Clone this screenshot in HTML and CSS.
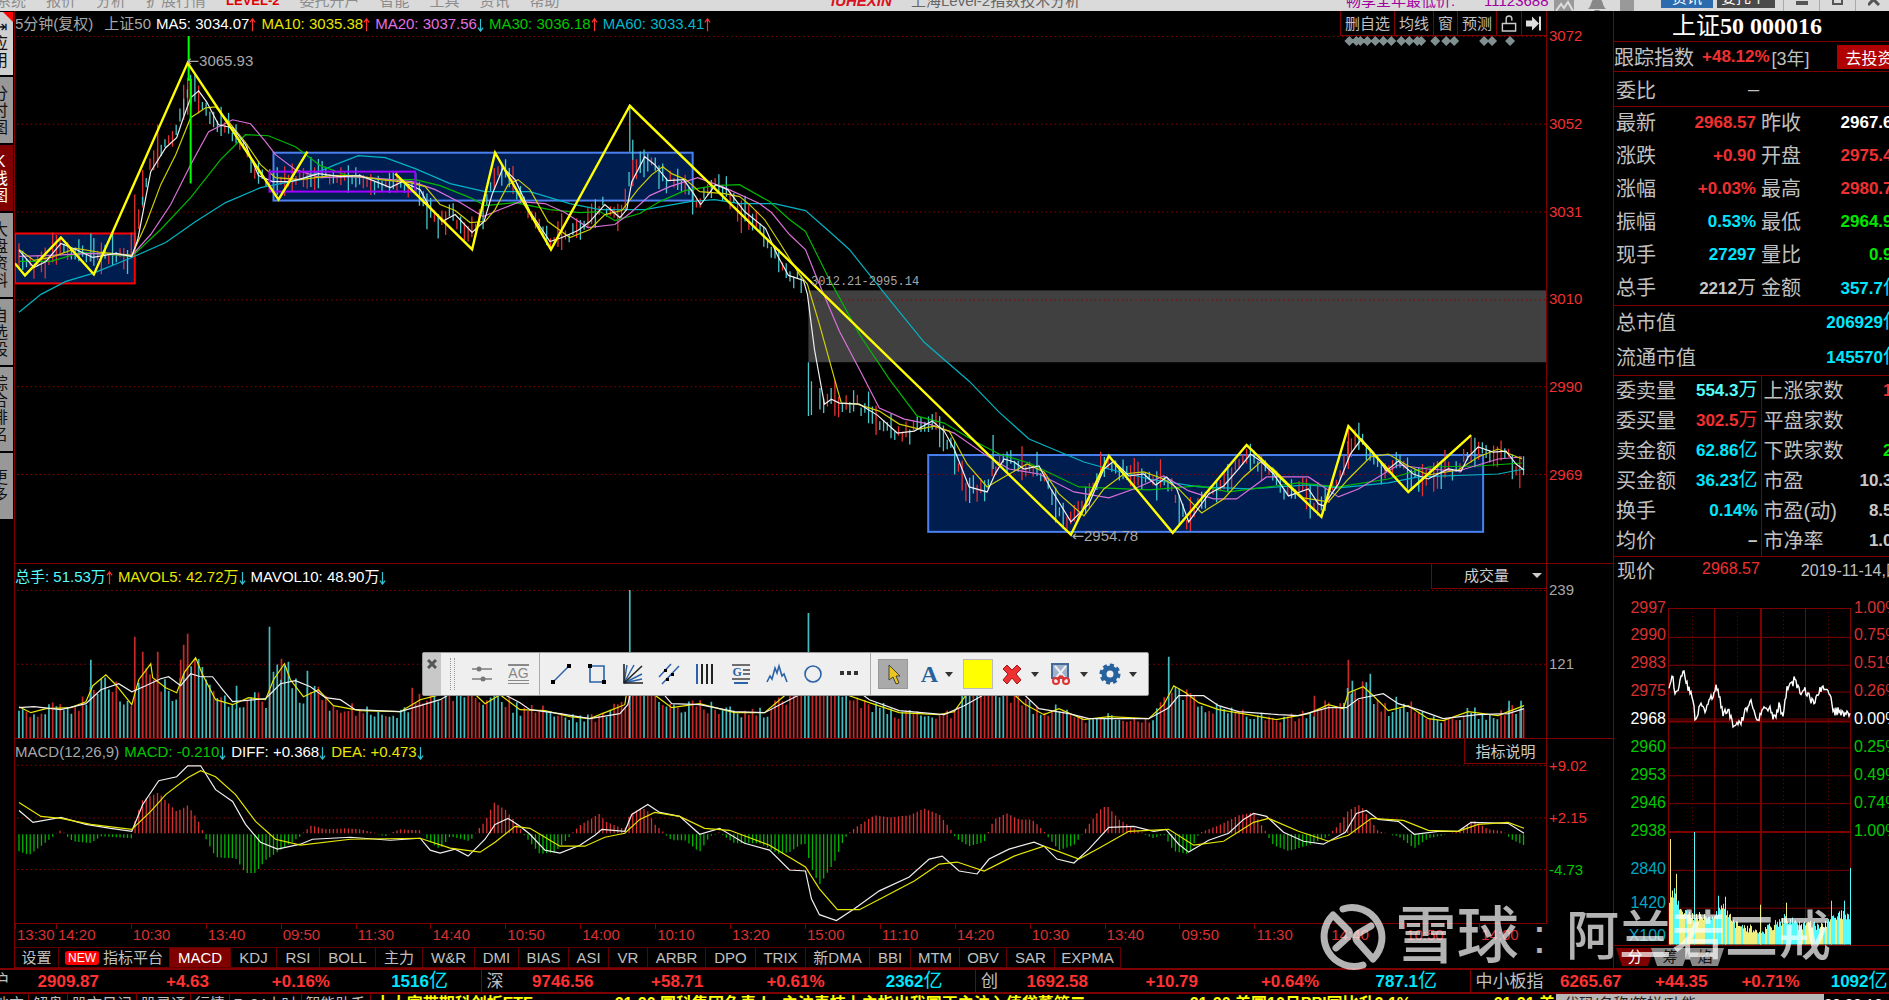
FILE: index.html
```
<!DOCTYPE html>
<html lang="zh-Hans">
<head>
  <meta charset="UTF-8">
  <title>上证50 000016</title>
  <link rel="stylesheet" href="styles.css">
</head>
<body>
  <svg class="defs" aria-hidden="true">
    <symbol id="up" viewBox="0 0 8 16"><path d="M4 15V2M1 5l3-4 3 4" fill="none" stroke="#ff3030" stroke-width="1.4"/></symbol>
    <symbol id="down" viewBox="0 0 8 16"><path d="M4 1v13M1 11l3 4 3-4" fill="none" stroke="#30c0d0" stroke-width="1.4"/></symbol>
    <symbol id="caret" viewBox="0 0 8 5"><path d="M0 0h8L4 5z" fill="#333"/></symbol>
  </svg>

  <header class="menubar">
    <nav class="menu">
      <a href="#">系统</a><a href="#">报价</a><a href="#">分析</a><a href="#">扩展行情</a><a href="#" class="level2">LEVEL-2</a><a href="#">委托开户</a><a href="#">智能</a><a href="#">工具</a><a href="#">资讯</a><a href="#">帮助</a>
    </nav>
    <b class="brand">iUHEXIN</b>
    <span class="apptitle">上海Level-2指数技术分析</span>
    <span class="promo">畅享全年最低价:</span>
    <span class="promo account">11123688</span>
    <span class="sysicons">
      <svg width="20" height="16" viewBox="0 0 20 16"><path d="M0 0h20v16H0z" fill="#999"/><path d="M2 14l5-7 3 4 4-6 5 9" fill="none" stroke="#ddd" stroke-width="2"/></svg>
      <svg width="18" height="16" viewBox="0 0 18 16"><path d="M0 12c4-3 3-12 9-12s5 9 9 12zM6 13h6l-3 3z" fill="#888"/></svg>
      <svg width="14" height="16" viewBox="0 0 14 16"><path d="M0 0h14v16H0z" fill="#999"/></svg>
    </span>
    <button class="topbtn info">资讯</button>
    <button class="topbtn trade">委托个-</button>
    <span class="winbtns">
      <button aria-label="最小化"><svg width="12" height="12"><path d="M0 7h12v4H0z" fill="#555"/></svg></button>
      <button aria-label="还原"><svg width="12" height="12"><path d="M1 1h9v9H1z" fill="none" stroke="#555" stroke-width="2"/></svg></button>
      <button aria-label="关闭"><svg width="12" height="12"><path d="M0 0l11 11M11 0L0 11" stroke="#555" stroke-width="3"/></svg></button>
    </span>
  </header>

  <main class="main">
    <nav class="side">
      <button class="s-app"><i></i><span>⇥应用</span></button>
      <button class="s3"><span>分时图</span></button>
      <button class="s3 on"><span>K线图</span></button>
      <button class="s4"><span>大盘资料</span></button>
      <button class="s3"><span>自选股</span></button>
      <button class="s4"><span>综合排名</span></button>
      <button class="s3"><span>更多</span></button>
    </nav>

    <section class="charts">
      <div class="panel price">
        <div class="plot">
          <svg class="canvas" id="kline" viewBox="14 11 1534 553" preserveAspectRatio="none"></svg>
          <div class="head">
            <span class="gray">5分钟(复权)</span>
            <span class="gray name">上证50</span>
            <span class="white">MA5: 3034.07<svg><use href="#up"/></svg></span>
            <span class="yellow">MA10: 3035.38<svg><use href="#up"/></svg></span>
            <span class="pink">MA20: 3037.56<svg><use href="#down"/></svg></span>
            <span class="green">MA30: 3036.18<svg><use href="#up"/></svg></span>
            <span class="sea">MA60: 3033.41<svg><use href="#up"/></svg></span>
            <span class="tools">
              <button>删自选</button><button>均线</button><button>窗</button><button>预测</button>
              <button aria-label="锁定"><svg class="ico" width="16" height="18" viewBox="0 0 16 18"><path d="M1 9h14v8H1zM5 9V4q0-3 3-3t3 3v2" fill="none" stroke="#ccc" stroke-width="1.5"/></svg></button>
              <button aria-label="移到最后"><svg class="ico" width="16" height="16" viewBox="0 0 16 16"><path d="M0 5h6V1l7 7-7 7v-4H0zM13 1h2v14h-2z" fill="#ddd"/></svg></button>
            </span>
          </div>
          <span class="note high"><i>←</i>3065.93</span>
          <span class="note gap">3012.21-2995.14</span>
          <span class="note low"><i>←</i>2954.78</span>
        </div>
        <div class="axis red"><span>3072</span><span>3052</span><span>3031</span><span>3010</span><span>2990</span><span>2969</span></div>
      </div>

      <div class="panel vol">
        <div class="plot">
          <svg class="canvas" id="volume" viewBox="14 564 1534 175" preserveAspectRatio="none"></svg>
          <div class="head">
            <span class="aqua">总手: 51.53万<svg><use href="#up"/></svg></span>
            <span class="yellow">MAVOL5: 42.72万<svg><use href="#down"/></svg></span>
            <span class="white">MAVOL10: 48.90万<svg><use href="#down"/></svg></span>
            <label class="picker"><select aria-label="指标"><option>成交量</option></select></label>
          </div>
        </div>
        <div class="axis gray"><span>239</span><span>121</span></div>
      </div>

      <div class="panel macd">
        <div class="plot">
          <svg class="canvas" id="macd" viewBox="14 739 1534 185" preserveAspectRatio="none"></svg>
          <div class="head">
            <span class="gray">MACD(12,26,9)</span>
            <span class="green">MACD: -0.210<svg><use href="#down"/></svg></span>
            <span class="white">DIFF: +0.368<svg><use href="#down"/></svg></span>
            <span class="yellow">DEA: +0.473<svg><use href="#down"/></svg></span>
            <button class="explain">指标说明</button>
          </div>
        </div>
        <div class="axis red"><span>+9.02</span><span>+2.15</span><span class="green">-4.73</span></div>
      </div>

      <div class="times">
        <span>13:30</span><span>14:20</span><span>10:30</span><span>13:40</span><span>09:50</span><span>11:30</span><span>14:40</span><span>10:50</span><span>14:00</span><span>10:10</span><span>13:20</span><span>15:00</span><span>11:10</span><span>14:20</span><span>10:30</span><span>13:40</span><span>09:50</span><span>11:30</span><span>14:40</span><span>10:50</span><span>14:00</span>
      </div>

      <nav class="tabs">
        <button>设置</button><button class="plat"><em>NEW</em>指标平台</button><button class="on">MACD</button><button>KDJ</button><button>RSI</button><button>BOLL</button><button>主力</button><button>W&amp;R</button><button>DMI</button><button>BIAS</button><button>ASI</button><button>VR</button><button>ARBR</button><button>DPO</button><button>TRIX</button><button>新DMA</button><button>BBI</button><button>MTM</button><button>OBV</button><button>SAR</button><button>EXPMA</button>
      </nav>

      <div class="drawbar">
        <button class="close" aria-label="关闭"><svg width="10" height="10"><path d="M1 1l8 8M9 1L1 9" stroke="#555" stroke-width="3"/></svg></button>
        <span class="grip"></span>
        <button aria-label="水平线"><svg width="24" height="24"><path d="M2 7h20M2 17h20" stroke="#999" stroke-width="2"/><circle cx="9" cy="7" r="2.5" fill="#777"/><circle cx="13" cy="17" r="2.5" fill="#777"/></svg></button>
        <button class="ag" aria-label="文字线"><span>AG</span></button>
        <span class="rule"></span>
        <button aria-label="线段"><svg width="24" height="24"><path d="M4 20L20 4" stroke="#2b62a8" stroke-width="1.5"/><path d="M2 18h4v4H2zM18 2h4v4h-4z"/></svg></button>
        <button aria-label="矩形"><svg width="24" height="24"><path d="M5 4h14v16H5z" fill="none" stroke="#2b62a8" stroke-width="1.6"/><path d="M3 2h4v4H3zM17 18h4v4h-4z"/></svg></button>
        <button aria-label="扇形线"><svg width="24" height="24"><path d="M3 21L6 3M3 21L13 3M3 21l18-9M3 21l18-4" stroke="#2b62a8" stroke-width="1.5"/><path d="M3 2v19h19M3 21L21 4" fill="none" stroke="#222" stroke-width="1.6"/></svg></button>
        <button aria-label="平行线"><svg width="24" height="24"><path d="M2 15L14 2M5 22L22 4" stroke="#2b62a8" stroke-width="1.5"/><path d="M7 7h3v3H7zM14 11h3v3h-3zM9 16h3v3H9z"/></svg></button>
        <button aria-label="周期线"><svg width="24" height="24"><path d="M4 2v20" stroke="#2b62a8" stroke-width="2"/><path d="M9 2v20M14 2v20M19 2v20" stroke="#222" stroke-width="2"/></svg></button>
        <button class="ge" aria-label="黄金分割"><svg width="24" height="24"><path d="M3 3h18M14 8h7M14 12h7M3 17h18" stroke="#444" stroke-width="1.5"/><path d="M5 21h14" stroke="#2b62a8" stroke-width="2"/></svg><span>G</span></button>
        <button aria-label="波浪"><svg width="24" height="24"><path d="M2 20l3-6 2 3 3-11 2 5 2-7 3 10 2-2 3 8" fill="none" stroke="#2b62a8" stroke-width="1.6"/></svg></button>
        <button aria-label="圆"><svg width="24" height="24"><circle cx="12" cy="12" r="8" fill="none" stroke="#2b62a8" stroke-width="1.6"/></svg></button>
        <button aria-label="更多"><svg width="24" height="24"><path d="M3 9h4v4H3zM10 9h4v4h-4zM17 9h4v4h-4z" fill="#333"/></svg></button>
        <span class="rule"></span>
        <button class="on" aria-label="选择"><svg width="24" height="24"><path d="M8 3v15l4-3 3 7 3-1-3-7h4z" fill="#ecc520" stroke="#443" stroke-width="1"/></svg></button>
        <button class="wide letter" aria-label="字体"><span>A</span><svg class="dd"><use href="#caret"/></svg></button>
        <button class="swatch" aria-label="颜色"></button>
        <button class="wide" aria-label="删除"><svg width="24" height="24"><path d="M7 3l5 5 5-5 4 4-5 5 5 6-4 4-5-6-5 6-4-4 5-6-5-5z" fill="#ee3030" stroke="#a01818"/></svg><svg class="dd"><use href="#caret"/></svg></button>
        <button class="wide" aria-label="截图"><svg width="24" height="24"><path d="M3 2h16v14H3z" fill="#9fb4cc" stroke="#47699a" stroke-width="2"/><path d="M6 4l10 12M17 4L7 16" stroke="#eee" stroke-width="2"/><path d="M12 14l-4 4M12 14l4 4" stroke="#d33" stroke-width="3"/><circle cx="7" cy="19" r="3" fill="none" stroke="#d33" stroke-width="2"/><circle cx="17" cy="19" r="3" fill="none" stroke="#d33" stroke-width="2"/></svg><svg class="dd"><use href="#caret"/></svg></button>
        <button class="wide" aria-label="设置"><svg width="24" height="24"><circle cx="12" cy="12" r="6" fill="none" stroke="#27629e" stroke-width="5"/><circle cx="12" cy="12" r="9" fill="none" stroke="#27629e" stroke-width="3" stroke-dasharray="4 3"/></svg><svg class="dd"><use href="#caret"/></svg></button>
      </div>
    </section>

    <aside class="quote">
      <div class="inner">
        <h1>上证<b>50 000016</b></h1>
        <div class="track"><span>跟踪指数</span><b class="red">+48.12%</b><span class="yr">[3年]</span><button>去投资</button></div>
        <div class="ratio"><span>委比</span><span>–</span></div>
        <table class="q6">
          <tr><th>最新</th><td class="red">2968.57</td><th>昨收</th><td class="white">2967.67</td></tr>
          <tr><th>涨跌</th><td class="red">+0.90</td><th>开盘</th><td class="red">2975.40</td></tr>
          <tr><th>涨幅</th><td class="red">+0.03%</td><th>最高</th><td class="red">2980.70</td></tr>
          <tr><th>振幅</th><td class="blue">0.53%</td><th>最低</th><td class="lime">2964.90</td></tr>
          <tr><th>现手</th><td class="blue">27297</td><th>量比</th><td class="lime">0.90</td></tr>
          <tr><th>总手</th><td class="silver">2212<i>万</i></td><th>金额</th><td class="blue">357.7<i>亿</i></td></tr>
        </table>
        <table class="caps">
          <tr><th>总市值</th><td class="blue">206929<i>亿</i></td></tr>
          <tr><th>流通市值</th><td class="blue">145570<i>亿</i></td></tr>
        </table>
        <table class="more">
          <tr><th>委卖量</th><td class="aqua">554.3<i>万</i></td><th>上涨家数</th><td class="red">19</td></tr>
          <tr><th>委买量</th><td class="red">302.5<i>万</i></td><th>平盘家数</th><td class="silver">2</td></tr>
          <tr><th>卖金额</th><td class="blue">62.86<i>亿</i></td><th>下跌家数</th><td class="lime">29</td></tr>
          <tr><th>买金额</th><td class="blue">36.23<i>亿</i></td><th>市盈</th><td class="silver">10.30</td></tr>
          <tr><th>换手</th><td class="blue">0.14%</td><th>市盈(动)</th><td class="silver">8.50</td></tr>
          <tr><th>均价</th><td class="silver">–</td><th>市净率</th><td class="silver">1.00</td></tr>
        </table>
        <div class="now"><span>现价</span><span class="red num">2968.57</span><span class="date">2019-11-14,四</span></div>
        <div class="mini">
          <div class="lcol">
            <div class="p"><span>2997</span><span>2990</span><span>2983</span><span>2975</span><span class="white">2968</span><span class="green">2960</span><span class="green">2953</span><span class="green">2946</span><span class="green">2938</span></div>
            <div class="v"><span>2840</span><span>1420</span><span>X100</span></div>
          </div>
          <svg id="mini" viewBox="1669 605 184 340" preserveAspectRatio="none"></svg>
          <div class="rcol">
            <div class="p"><span>1.00%</span><span>0.75%</span><span>0.51%</span><span>0.26%</span><span class="white">0.00%</span><span class="green">0.25%</span><span class="green">0.49%</span><span class="green">0.74%</span><span class="green">1.00%</span></div>
          </div>
        </div>
        <div class="minitabs"><button class="on">分</button><button>筹</button><button>焰</button></div>
      </div>
    </aside>
  </main>

  <footer>
    <div class="indices">
      <div class="idx"><span>沪</span><b>2909.87</b><b>+4.63</b><b>+0.16%</b><b class="blue">1516<i>亿</i></b></div>
      <div class="idx"><span>深</span><b>9746.56</b><b>+58.71</b><b>+0.61%</b><b class="blue">2362<i>亿</i></b></div>
      <div class="idx"><span>创</span><b>1692.58</b><b>+10.79</b><b>+0.64%</b><b class="blue">787.1<i>亿</i></b></div>
      <div class="idx last"><span>中小板指</span><b>6265.67</b><b>+44.35</b><b>+0.71%</b><b class="blue">1092<i>亿</i></b></div>
    </div>
    <div class="ticker">
      <a href="#">地方</a><a href="#">解盘</a><a href="#">股市日记</a><a href="#">股灵通</a><a href="#">行情</a><a href="#">7x24小时</a><a href="#">智能助手</a>
      <div class="newsline">
        <span>十大富带期科创板ETF</span>
        <span>21:20 国科集团负责人: 主注责技上主指出我国正主注入值贷董第二</span>
        <span>21:20 美国10月PPI同比升2.1%</span>
        <span>21:21 美国</span>
      </div>
      <input type="text" value="代码/名称/简拼/功能" aria-label="代码">
      <span class="clock">22:23:16</span>
    </div>
  </footer>

  <div class="watermark">
    <svg width="68" height="68" viewBox="0 0 68 68"><path d="M24 6A30 30 0 0 1 54 56L38 38Q35 33 40 30L52 23M44 62A30 30 0 0 1 14 12L28 26Q33 30 28 35L17 45" fill="none" stroke="#fff" stroke-width="7" stroke-linecap="round" stroke-linejoin="round"/></svg>
    <span class="wm-brand">雪球</span><span class="wm-colon">:</span><span class="wm-user">阿兰若二戒</span>
  </div>

  <script src="script.js"></script>
</body>
</html>
```
FILE: styles.css
```
* {
  box-sizing: border-box;
}
body {
  margin: 0;
  height: 100vh;
  overflow: hidden;
  display: flex;
  flex-direction: column;
  position: relative;
  background: #000;
  color: #c0c0c0;
  font: 15px "Liberation Sans", "Noto Sans CJK SC", sans-serif;
}
button, select, input {
  font: inherit;
  color: inherit;
  background: none;
  border: 0;
  border-radius: 0;
  padding: 0;
  margin: 0;
}
a {
  color: inherit;
  text-decoration: none;
}
i {
  font-style: normal;
  font-weight: normal;
}
.defs {
  position: absolute;
  width: 0;
  height: 0;
}
.red { color: #f03030; }
.white { color: #fff; }
.gray { color: #a8a8a8; }
.silver { color: #c8c8c8; }
.yellow { color: #e6e600; }
.pink { color: #e070e0; }
.green { color: #00c800; }
.lime { color: #00e600; }
.sea { color: #00b8c8; }
.aqua { color: #54fcfc; }
.blue { color: #00e6ff; }

/* top menu, scrolled half out of view */
.menubar {
  height: 11px;
  flex: none;
  overflow: hidden;
  display: flex;
  align-items: flex-end;
  background: #dadada;
  color: #8c8c8c;
  font-size: 15px;
  line-height: 20px;
  white-space: nowrap;
}
.menubar > * {
  flex: none;
}
.menu {
  display: flex;
  gap: 20px;
  margin-left: -4px;
  width: 835px;
}
.menu .level2 {
  color: #e00000;
  font-weight: bold;
  font-size: 13px;
}
.brand {
  width: 80px;
  color: #d81020;
  font-style: italic;
}
.apptitle {
  width: 435px;
  color: #666;
}
.promo {
  width: 138px;
  color: #a000a0;
}
.account {
  width: 70px;
}
.sysicons {
  display: flex;
  gap: 14px;
  width: 107px;
  height: 14px;
}
.topbtn {
  height: 20px;
  margin-bottom: 3px;
  color: #fff;
}
.topbtn.info {
  width: 52px;
  background: #2c6cae;
}
.topbtn.trade {
  width: 58px;
  margin-left: 4px;
  background: #4a4a4a;
}
.winbtns {
  display: flex;
  margin-left: 8px;
}
.winbtns button {
  width: 36px;
  height: 20px;
  border-left: 1px solid #aaa;
}

.main {
  flex: 1;
  min-height: 0;
  display: grid;
  grid-template-columns: 14px 1fr 276px;
}

/* left tabs */
.side {
  display: flex;
  flex-direction: column;
  gap: 2px;
  padding-top: 1px;
  overflow: hidden;
}
.side button {
  width: 13px;
  height: 66px;
  flex: none;
  background: #989898;
  color: #111;
  overflow: hidden;
  display: flex;
  align-items: center;
  position: relative;
}
.side .s4 {
  height: 84px;
}
.side .s-app {
  height: 63px;
  background: #cfcfcf;
}
.side .s-app i {
  position: absolute;
  top: 0;
  right: 0;
  border: 5px solid;
  border-color: #f00 #f00 transparent transparent;
}
.side span {
  width: 16px;
  flex: none;
  margin-left: -8px;
  font-size: 16px;
  line-height: 17px;
  word-break: break-all;
}
.side .on {
  background: #800000;
  color: #fff;
}

/* chart column */
.charts {
  display: flex;
  flex-direction: column;
  min-width: 0;
  min-height: 0;
  position: relative;
  border-left: 1px solid #800000;
}
.panel {
  display: grid;
  grid-template-columns: 1fr 66px;
  border-bottom: 1px solid #800000;
  min-height: 0;
}
.price { flex: 553 1 0; }
.vol { flex: 175 1 0; }
.macd {
  flex: 185 1 0;
  border-bottom: 0;
}
.macd .plot {
  border-bottom: 1px solid #800000;
}
.plot {
  position: relative;
  border-right: 1px solid #800000;
  min-height: 0;
}
.canvas {
  position: absolute;
  width: 100%;
  height: 100%;
}
.head {
  position: relative;
  display: flex;
  gap: 5px;
  height: 25px;
  line-height: 25px;
  white-space: nowrap;
}
.head .name {
  margin-left: 6px;
}
.head span svg {
  width: 7px;
  height: 14px;
  vertical-align: -3px;
}
.tools {
  margin-left: auto;
  display: flex;
  border-bottom: 1px solid #800000;
}
.tools button {
  border-left: 1px solid #800000;
  padding: 0 4px;
}
.tools svg.ico {
  width: 16px;
  height: 17px;
}
.picker {
  margin-left: auto;
  width: 115px;
  display: flex;
  align-items: center;
  border: solid #800000;
  border-width: 0 0 1px 1px;
}
.picker select {
  appearance: none;
  flex: 1;
  padding-left: 32px;
  color: #ccc;
}
.picker::after {
  content: "";
  border: 5px solid transparent;
  border-top-color: #ccc;
  border-bottom: 0;
  margin-right: 4px;
}
.explain {
  margin-left: auto;
  width: 82px;
  color: #ccc;
  border: solid #800000;
  border-width: 0 0 1px 1px;
}
.note {
  position: absolute;
  color: #a8a8a8;
  line-height: 18px;
}
.note i {
  font-family: "DejaVu Sans", sans-serif;
}
.note.high { left: 11.2%; top: 7.5%; }
.note.low { left: 69%; top: 93.5%; }
.note.gap {
  left: 52%;
  top: 47.4%;
  font-family: "Liberation Mono", monospace;
  font-size: 12px;
}
.axis {
  display: flex;
  flex-direction: column;
  justify-content: space-between;
  padding: 16px 0 79px 2px;
  line-height: 18px;
}
.vol .axis { padding: 17px 0 65px 2px; }
.macd .axis { padding: 18px 0 45px 2px; }
.times {
  height: 23px;
  flex: none;
  margin-right: 66px;
  display: grid;
  grid-template-columns: 41fr repeat(19, 75fr) 68fr;
  color: #d83030;
  line-height: 22px;
}
.times span {
  padding-left: 2px;
  background: linear-gradient(#800000, #800000) no-repeat 0 0 / 1px 5px;
}
.tabs {
  height: 21px;
  flex: none;
  display: grid;
  grid-template-columns: 44px 111px 61px 46px 43px 56px 47px 52px 44px 50px 40px 39px 58px 50px 50px 64px 41px 49px 47px 48px 66px;
  line-height: 19px;
}
.tabs button {
  border: 1px solid #600000;
  border-left: 0;
  white-space: nowrap;
}
.tabs .on {
  background: #800000;
  color: #fff;
}
.tabs em {
  display: inline-block;
  background: #f00;
  color: #fff;
  font-style: normal;
  font-size: 12px;
  line-height: 14px;
  padding: 0 3px;
  margin-right: 4px;
  border-radius: 3px;
  vertical-align: 1px;
}

/* floating drawing toolbar */
.drawbar {
  position: absolute;
  left: 25.5%;
  top: 67%;
  height: 44px;
  display: flex;
  align-items: center;
  padding-right: 6px;
  background: #efefef;
  border: 1px solid #999;
  border-radius: 2px;
  color: #000;
}
.drawbar button {
  width: 36px;
  height: 30px;
  display: flex;
  align-items: center;
  justify-content: center;
  position: relative;
}
.drawbar .close {
  width: 18px;
  height: 42px;
  background: #c8c8c8;
  align-items: flex-start;
  padding-top: 6px;
}
.grip {
  height: 32px;
  width: 5px;
  margin: 0 9px;
  border: dotted #999;
  border-width: 0 1px;
}
.rule {
  width: 1px;
  height: 42px;
  margin: 0 3px;
  background: #aaa;
}
.ag span {
  border: solid #888;
  border-width: 2px 0 4px;
  border-bottom-style: double;
  color: #888;
  font-size: 14px;
  line-height: 14px;
}
.ge span {
  position: absolute;
  left: 9px;
  top: 6px;
  color: #2b62a8;
  font: bold 12px/14px "Liberation Serif", serif;
}
.drawbar .on {
  width: 30px;
  margin: 0 4px;
  background: #aaa;
  border: 1px solid #999;
}
.drawbar .wide {
  width: 49px;
  gap: 7px;
}
.dd {
  width: 8px;
  height: 5px;
}
.letter span {
  color: #27629e;
  font: bold 24px "Liberation Serif", serif;
}
.drawbar .swatch {
  width: 30px;
  background: #ff0;
  border: 1px solid #bbb;
  margin: 0 2px;
}

/* quote panel */
.quote {
  border-left: 1px solid #800000;
  overflow: hidden;
}
.inner {
  width: 288px;
  height: 100%;
  display: flex;
  flex-direction: column;
}
.inner > * {
  flex: none;
}
.quote h1 {
  margin: 0;
  padding-left: 58px;
  height: 30px;
  color: #fff;
  font: 24px/30px "Liberation Serif", "Noto Sans CJK SC", serif;
}
.track, .ratio {
  display: flex;
  align-items: center;
  border-top: 1px solid #800000;
  font-size: 20px;
}
.track {
  height: 30px;
}
.track b {
  font-size: 17px;
  margin-left: 8px;
}
.yr {
  font-size: 18px;
  margin-left: 2px;
}
.track button {
  margin-left: auto;
  width: 65px;
  height: 24px;
  background: #b00000;
  color: #fff;
  font-size: 16px;
}
.ratio {
  height: 35px;
  padding-left: 2px;
  gap: 92px;
}
.quote table {
  border-collapse: collapse;
  width: 100%;
  border-top: 1px solid #800000;
  table-layout: fixed;
}
.quote th {
  padding: 0 0 0 2px;
  text-align: left;
  font-weight: normal;
  font-size: 20px;
  white-space: nowrap;
  line-height: 24px;
}
.quote td {
  padding: 0;
  text-align: right;
  font-weight: bold;
  font-size: 17px;
  white-space: nowrap;
  line-height: 24px;
}
.quote td i {
  font-size: 19px;
}
.q6 tr { height: 33px; }
.q6 th { width: 50px; }
.q6 td:nth-child(2) { width: 92px; }
.q6 th:nth-child(3) { padding-left: 5px; }
.caps tr { height: 35px; }
.more tr { height: 30px; }
.more th { width: 64px; }
.more td:nth-child(2) {
  width: 83px;
  border-right: 1px solid #800000;
  padding-right: 3px;
}
.more th:nth-child(3) { width: 84px; }
.now {
  display: flex;
  align-items: center;
  height: 34px;
  border-top: 1px solid #800000;
  padding: 0 0 8px 3px;
  font-size: 19px;
}
.now .num {
  font-size: 16px;
  margin-left: 47px;
}
.date {
  font-size: 16px;
  margin-left: 41px;
  white-space: nowrap;
}
.inner .mini {
  flex: 1;
  min-height: 0;
  display: grid;
  grid-template-columns: 54px 184px 50px;
  padding-top: 17px;
  color: #d83030;
}
#mini {
  width: 100%;
  height: 100%;
}
.lcol, .rcol {
  display: grid;
  grid-template-rows: 243fr 105fr;
  line-height: 18px;
  font-size: 16px;
  margin-top: -8px;
}
.lcol {
  text-align: right;
  padding-right: 2px;
}
.rcol {
  padding-left: 2px;
}
.p, .v {
  display: flex;
  flex-direction: column;
  justify-content: space-between;
}
.v {
  padding-top: 20px;
  color: #00a8c0;
}
.minitabs {
  height: 23px;
  display: flex;
  border-top: 1px solid #800000;
  padding: 2px 0 2px 2px;
}
.minitabs button {
  width: 38px;
  margin-right: -3px;
  background: #888;
  color: #111;
  clip-path: polygon(0 0, 100% 0, 84% 100%, 16% 100%);
  line-height: 18px;
}
.minitabs .on {
  background: #800000;
  color: #fff;
}

/* index strip and news ticker */
footer {
  flex: none;
  overflow: hidden;
}
.indices {
  display: flex;
  height: 26px;
  margin-left: -13px;
  border: solid #800000;
  border-width: 2px 0;
}
.idx {
  flex: 0 0 26%;
  display: grid;
  grid-template-columns: 30px 82px 110px 121px 118px;
  align-items: center;
  border-right: 1px solid #800000;
  color: #ff3232;
  font-size: 17px;
  text-align: right;
  white-space: nowrap;
  line-height: 22px;
}
.idx.last {
  grid-template-columns: 78px 73px 86px 92px 88px;
}
.idx span {
  color: #c0c0c0;
  text-align: left;
  padding-left: 5px;
}
.idx .blue i {
  font-size: 19px;
}
.ticker {
  height: 6px;
  display: flex;
  overflow: hidden;
  white-space: nowrap;
  line-height: 20px;
}
.ticker > * {
  flex: none;
}
.ticker a {
  padding: 0 4px;
  border-right: 1px solid #800000;
}
.ticker a:first-child {
  margin-left: -10px;
}
.ticker .newsline {
  flex: 1 1 0;
  min-width: 0;
  display: grid;
  grid-template-columns: 240px 575px 304px 1fr;
  overflow: hidden;
  padding-left: 4px;
  color: #ff0;
  font-size: 16px;
  font-weight: bold;
}
.ticker input {
  width: 268px;
  height: 20px;
  padding-left: 8px;
  background: #b8b8b8;
  color: #222;
}
.clock {
  width: 65px;
  color: #fff;
}

.watermark {
  position: absolute;
  right: 58px;
  bottom: 28px;
  height: 70px;
  display: flex;
  align-items: center;
  color: #fff;
  opacity: 0.7;
  pointer-events: none;
  line-height: 70px;
  font-weight: 500;
}
.wm-brand {
  margin-left: 8px;
  font-size: 62px;
}
.wm-colon {
  margin: 0 20px 0 14px;
  font-size: 48px;
}
.wm-user {
  font-size: 53px;
}
```
FILE: script.js
```
const NS = "http://www.w3.org/2000/svg";
const STEP = 3.75;

function add(svg, tag, attrs) {
  const el = document.createElementNS(NS, tag);
  for (const k in attrs) el.setAttribute(k, attrs[k]);
  svg.appendChild(el);
  return el;
}

function line(svg, points, color, width = 1) {
  add(svg, "polyline", { points, fill: "none", stroke: color, "stroke-width": width });
}

function rect(svg, x, y, w, h, fill, stroke) {
  add(svg, "rect", { x, y, width: w, height: h, fill, stroke: stroke || "none", "stroke-width": 2 });
}

function seg(x, a, b) {
  return `M${x} ${a.toFixed(1)}V${b.toFixed(1)}`;
}

function parse(s) {
  return s.trim().split(/\s+/).map(p => p.split(",").map(Number));
}

function at(pts, x) {
  if (x <= pts[0][0]) return pts[0][1];
  for (let i = 1; i < pts.length; i++) {
    if (x <= pts[i][0]) {
      const [x0, y0] = pts[i - 1], [x1, y1] = pts[i];
      return y0 + (y1 - y0) * (x - x0) / (x1 - x0);
    }
  }
  return pts[pts.length - 1][1];
}

// repeatable noise, 0..1
function noise(i) {
  const v = Math.sin(i * 127.1 + 11.7) * 43758.5453;
  return v - Math.floor(v);
}

function grid(svg, ys) {
  ys.forEach(y => add(svg, "path", { d: `M16 ${y + 0.5}H1548`, stroke: "#900000", "stroke-dasharray": "1.5 3" }));
}

const MA5 = "18,251 33,268 45,262 60,244 75,250 92,258 115,254 131,257 137,240 150,172 165,148 176,138 182,120 190,98 198,91 206,102 218,125 232,128 245,145 258,176 272,182 290,182 305,178 318,174 340,177 360,176 378,183 390,188 402,182 420,190 428,205 442,222 455,215 472,233 484,222 492,195 503,168 515,180 530,212 550,242 562,238 578,231 590,222 605,205 620,218 627,210 632,182 645,157 655,165 668,181 684,180 694,194 701,205 716,185 728,190 745,212 766,229 778,256 789,276 804,281 808,295 815,350 825,405 832,400 840,404 860,405 878,416 898,434 915,432 933,422 945,432 955,450 970,488 988,493 996,475 1005,460 1015,463 1025,470 1040,467 1052,490 1072,523 1090,505 1105,470 1115,462 1130,477 1145,475 1157,486 1168,478 1178,490 1190,523 1210,495 1225,487 1240,470 1252,455 1262,462 1275,475 1290,497 1310,490 1320,505 1325,507 1340,485 1352,455 1363,440 1375,453 1388,472 1400,462 1415,475 1430,480 1450,470 1463,472 1470,458 1480,448 1495,453 1508,452 1518,465 1526,471";
const MA10 = "18,250 33,261 50,258 75,249 100,253 131,256 145,225 160,185 175,155 190,118 205,108 215,107 228,122 245,143 260,165 275,178 300,180 330,176 355,176 380,180 410,183 425,187 440,205 455,211 470,223 485,222 495,210 508,185 518,180 530,190 548,222 570,238 590,230 605,215 622,211 638,190 652,175 663,167 672,174 686,180 700,192 725,194 740,197 750,205 765,220 780,243 800,275 808,285 820,325 838,390 842,404 858,405 880,412 900,425 920,430 935,427 950,432 968,465 988,488 1005,478 1028,465 1045,473 1060,495 1085,517 1105,490 1125,475 1145,473 1165,480 1180,490 1203,514 1225,500 1245,478 1262,463 1275,470 1290,485 1305,499 1330,503 1350,480 1372,458 1390,455 1410,467 1430,476 1460,471 1480,458 1500,450 1524,460";
const MA20 = "18,257 50,256 90,254 131,256 150,235 170,205 190,165 208,132 232,120 250,124 265,142 275,155 295,170 320,178 350,177 380,179 412,182 435,190 460,203 483,217 500,210 520,202 545,204 565,213 588,228 615,225 630,214 650,196 670,187 698,178 725,188 760,204 772,213 790,235 806,250 818,280 840,332 860,370 880,409 905,420 930,425 955,434 985,455 1010,470 1040,475 1075,493 1110,499 1135,490 1165,477 1190,492 1215,500 1238,500 1268,478 1310,478 1340,498 1360,490 1400,466 1430,470 1460,472 1500,460 1524,458";
const MA30 = "18,262 50,262 80,253 131,257 160,230 190,198 220,160 245,135 268,136 295,147 320,166 350,177 390,180 415,180 440,186 470,198 485,206 515,203 550,210 580,213 600,212 615,221 640,214 660,202 685,191 715,186 740,185 770,202 790,220 806,232 830,280 860,335 890,380 918,417 945,424 975,442 1000,455 1030,464 1080,488 1150,491 1200,487 1230,493 1270,488 1300,484 1340,488 1390,480 1430,468 1480,467 1524,464";
const MA60 = "18,313 40,295 65,282 92,274 131,258 165,243 195,222 225,203 260,188 300,180 335,165 358,156 385,158 415,169 450,184 485,192 530,192 570,204 600,210 645,210 690,202 715,200 740,204 775,204 806,211 830,232 850,250 890,300 925,343 970,382 1000,413 1030,440 1085,463 1110,470 1150,480 1200,488 1250,490 1310,486 1340,489 1390,484 1420,478 1500,475 1526,470";

function drawKline() {
  const svg = document.getElementById("kline");
  rect(svg, 809, 291, 740, 72, "#404040");
  rect(svg, 14, 234, 120, 50, "#001d50", "#f00");
  rect(svg, 273, 153, 420, 48, "#001d50", "#4a80f0");
  rect(svg, 929, 456, 556, 77, "#001d50", "#4a80f0");
  grid(svg, [36, 124, 212, 300, 387, 475]);

  const pts = parse(MA5);
  let up = "", down = "";
  for (let i = 0; i < 403; i++) {
    const x = 18 + i * STEP;
    if (x > 804 && x < 818) continue;
    const mid = at(pts, x < 804 ? Math.min(x + 3, 803) : x + 3) + (noise(i) - 0.5) * 12;
    const rising = at(pts, x + 9) < at(pts, x + 1);
    const len = 4 + noise(i + 500) * noise(i + 200) * 16;
    const s = seg(x, mid - len, mid + len);
    if (noise(i + 900) < (rising ? 0.75 : 0.28)) up += s; else down += s;
  }
  up += seg(183, 85, 120) + seg(187, 78, 115) + seg(134, 195, 250) + seg(142, 170, 208) + seg(157, 125, 168) + seg(1350, 430, 470);
  down += seg(630, 106, 152) + seg(633, 140, 160) + seg(809, 363, 417) + seg(812, 382, 416) + seg(190, 75, 108) + seg(90, 234, 262) + seg(994, 436, 470);
  add(svg, "path", { d: up, stroke: "#e83030", "stroke-width": 1.3 });
  add(svg, "path", { d: down, stroke: "#48c8cc", "stroke-width": 1.3 });

  line(svg, MA60, "#00b4c4", 1.2);
  line(svg, MA30, "#00b800", 1.2);
  line(svg, MA20, "#d870d8", 1.2);
  line(svg, MA10, "#d0d000", 1.2);
  line(svg, MA5, "#f0f0f0", 1.2);

  rect(svg, 269, 172, 146, 20, "none", "#a000ff");
  line(svg, "188,36 188,80 190,80 190,184", "#00ff00", 2);
  line(svg, "14,264 24,276 60,238 93,275 187,63 278,200 307,152", "#ff0", 2.4);
  line(svg, "395,174 472,250 495,153 551,250 630,106 1072,536 1110,457 1174,534 1248,446 1323,518 1350,427 1410,493 1473,436", "#ff0", 2.4);

  let d = "";
  [1351, 1358, 1362, 1369, 1377, 1385, 1393, 1403, 1411, 1419, 1423, 1437, 1448, 1456, 1486, 1494, 1512]
    .forEach(x => d += `M${x - 5} 41l5 -5 5 5 -5 5z`);
  add(svg, "path", { d, fill: "#809090" });
}

const VOL5 = "18,707 30,713 45,709 70,708 85,702 92,686 105,675 115,685 131,705 138,680 150,664 152,678 165,688 176,693 184,672 195,658 202,675 215,700 232,705 248,698 265,700 273,680 284,664 290,680 303,697 318,690 333,706 360,711 400,712 420,700 440,695 470,690 485,704 500,695 520,710 545,711 570,717 590,719 610,711 625,705 632,660 645,680 656,696 672,708 700,704 735,713 765,713 785,696 810,670 835,670 850,696 870,703 900,713 940,715 955,712 965,698 985,675 1010,690 1025,704 1045,715 1060,709 1085,720 1110,717 1150,719 1165,705 1175,686 1187,693 1200,703 1220,710 1250,715 1278,720 1310,714 1330,705 1345,709 1350,693 1365,687 1375,696 1390,711 1410,706 1430,719 1445,721 1470,712 1500,716 1526,706";
const VOL10 = "18,708 33,707 60,710 85,704 100,690 118,684 131,692 145,686 160,679 168,677 180,686 190,674 200,677 212,677 222,690 232,702 265,699 280,684 295,681 310,687 325,698 340,700 355,710 400,712 440,700 475,680 495,690 520,703 530,710 560,714 590,719 620,714 628,705 634,680 660,690 672,704 700,705 735,712 765,713 790,700 810,690 850,685 870,700 900,711 945,715 965,706 990,692 1020,690 1040,709 1070,714 1090,719 1150,719 1170,708 1180,696 1205,696 1220,706 1240,712 1280,715 1300,716 1330,708 1348,708 1360,699 1385,694 1400,704 1420,710 1445,719 1480,715 1510,714 1526,709";

function drawVolume() {
  const svg = document.getElementById("volume");
  grid(svg, [590, 664]);
  const pts = parse(VOL5);
  let up = "", down = "";
  for (let i = 0; i < 403; i++) {
    const x = 18 + i * STEP;
    const top = 739 - (739 - at(pts, x)) * (0.75 + noise(i + 40) * 0.45);
    const s = seg(x, top, 739);
    if (noise(Math.floor(i / 3) + 70) * 0.6 + noise(i) * 0.4 < 0.5) up += s; else down += s;
  }
  [[134, 637], [142, 652], [157, 652], [180, 660], [183, 645], [187, 634], [281, 659], [412, 688], [1316, 696], [1350, 660]]
    .forEach(p => up += seg(p[0], p[1], 739));
  [[90, 660], [236, 686], [269, 627], [273, 672], [307, 671], [630, 590], [809, 613], [1354, 681], [1372, 674], [1398, 697], [1170, 657], [1511, 701], [1523, 701]]
    .forEach(p => down += seg(p[0], p[1], 739));
  add(svg, "path", { d: up, stroke: "#c82828", "stroke-width": 1.7 });
  add(svg, "path", { d: down, stroke: "#44bcc0", "stroke-width": 1.7 });
  line(svg, VOL5, "#e6e600", 1.2);
  line(svg, VOL10, "#f0f0f0", 1.2);
}

const HIST = "18,851 28,855 40,846 55,834 60,831 72,841 90,843 100,836 131,838 135,818 142,800 158,793 165,801 176,812 187,806 197,820 205,838 215,857 225,858 235,858 245,873 255,873 265,860 280,850 300,836 311,826 325,830 345,829 360,830 385,836 400,830 420,831 430,842 440,849 450,836 470,841 478,830 485,822 494,803 505,810 515,822 525,836 540,854 555,852 570,836 580,826 600,814 605,822 625,830 630,815 640,809 647,810 655,825 665,834 672,840 685,840 700,852 710,836 720,833 735,843 760,843 780,854 790,852 805,842 812,868 820,885 835,862 845,838 855,829 875,816 890,818 910,816 925,809 940,815 950,828 957,838 970,846 985,842 995,820 1008,814 1020,820 1033,820 1045,832 1060,850 1075,845 1085,832 1100,811 1108,806 1120,820 1140,832 1155,838 1165,834 1175,851 1190,854 1200,834 1220,826 1240,816 1255,813 1265,829 1275,845 1290,851 1310,845 1330,836 1340,826 1350,811 1362,805 1370,818 1380,832 1400,836 1416,848 1430,838 1460,832 1475,821 1490,830 1505,832 1515,840 1526,845";
const DIFF = "18,811 32,823 60,818 85,825 110,829 131,832 142,805 158,781 176,777 187,766 200,766 215,790 232,802 245,825 260,843 277,850 300,845 312,840 350,838 390,841 420,839 430,851 440,854 455,850 468,857 485,840 495,825 508,819 520,827 530,835 545,851 560,854 580,846 595,836 602,830 625,832 632,815 648,805 660,813 680,817 700,835 720,829 745,844 770,851 790,871 806,872 812,900 820,916 837,922 855,910 880,892 910,878 930,860 943,857 960,872 978,875 990,860 1010,850 1035,843 1045,847 1058,860 1075,864 1090,850 1110,828 1135,827 1155,832 1167,830 1180,845 1190,853 1210,841 1230,834 1245,820 1255,814 1268,817 1285,833 1305,842 1325,845 1347,833 1358,814 1368,811 1380,820 1400,822 1416,835 1440,832 1460,832 1473,823 1510,824 1526,834";
const DEA = "18,803 40,817 60,819 90,825 131,830 150,812 165,795 187,778 200,771 215,777 235,795 255,822 275,840 300,846 350,840 420,839 450,849 480,853 495,843 515,827 530,829 560,847 585,847 605,838 625,834 640,820 655,813 680,817 705,829 730,831 770,846 806,868 820,890 838,911 860,911 885,898 915,882 940,865 958,863 985,872 1015,857 1045,847 1080,860 1100,849 1130,832 1170,830 1195,846 1225,842 1255,823 1270,819 1300,832 1330,842 1350,836 1373,819 1405,821 1430,831 1460,832 1480,825 1510,823 1526,829";

function drawMacd() {
  const svg = document.getElementById("macd");
  grid(svg, [765, 818, 870]);
  const pts = parse(HIST);
  let up = "", down = "";
  for (let x = 18; x < 1528; x += STEP) {
    const y = at(pts, x);
    if (y < 834) up += seg(x, y, 834); else down += seg(x, 835, y + 1);
  }
  add(svg, "path", { d: up, stroke: "#d83030", "stroke-width": 1.3 });
  add(svg, "path", { d: down, stroke: "#00b400", "stroke-width": 1.3 });
  line(svg, DIFF, "#f0f0f0", 1.2);
  line(svg, DEA, "#e6e600", 1.2);
}

const DAY = "1670,689 1673,670 1676,690 1680,683 1684,670 1690,688 1694,695 1696,720 1702,702 1706,711 1710,702 1717,684 1722,702 1724,712 1730,711 1734,726 1742,720 1750,702 1752,698 1758,717 1764,710 1768,704 1775,716 1780,705 1784,712 1788,689 1796,677 1802,695 1806,690 1812,698 1816,700 1820,690 1823,686 1832,692 1834,712 1840,709 1851,713";
const DAYVOL = "1670,900 1675,890 1680,905 1690,915 1700,915 1715,920 1720,905 1726,908 1735,925 1760,930 1775,925 1785,918 1800,925 1825,925 1835,915 1850,914";

function drawMini() {
  const svg = document.getElementById("mini");
  const thin = "#800000";
  [606, 635, 663, 690, 717, 746, 774, 802, 869, 907].forEach(y => line(svg, `1669,${y}.5 1852,${y}.5`, thin));
  [720, 831].forEach(y => line(svg, `1669,${y} 1852,${y}`, thin, 2));
  [1669, 1715, 1806, 1851].forEach(x => line(svg, `${x}.5,606 ${x}.5,945`, thin));
  line(svg, "1762,606 1762,945", thin, 2);
  [1693, 1738, 1784, 1829].forEach(x => add(svg, "path", { d: `M${x}.5 606V945`, stroke: thin, "stroke-dasharray": "1 3" }));

  const vol = parse(DAYVOL);
  let y1 = "", c1 = "";
  for (let i = 0; i < 182; i++) {
    const x = 1670 + i;
    const s = seg(x + 0.5, at(vol, x) + (noise(i) - 0.5) * 10, 944);
    if (noise(Math.floor(i / 2) + 30) < 0.5) y1 += s; else c1 += s;
  }
  [[1671, 838], [1677, 873], [1726, 896], [1761, 904], [1787, 902]].forEach(p => y1 += seg(p[0] + 0.5, p[1], 944));
  [[1695, 831], [1719, 895], [1832, 900], [1845, 900], [1851, 867]].forEach(p => c1 += seg(p[0] + 0.5, p[1], 944));
  add(svg, "path", { d: y1, stroke: "#f0f080" });
  add(svg, "path", { d: c1, stroke: "#54fcfc" });

  const day = parse(DAY);
  let pts = "";
  for (let i = 0; i < 182; i++) pts += `${1670 + i},${(at(day, 1670 + i) + (noise(i + 5) - 0.5) * 9).toFixed(1)} `;
  line(svg, pts, "#fff", 1.4);
}

drawKline();
drawVolume();
drawMacd();
drawMini();
```
